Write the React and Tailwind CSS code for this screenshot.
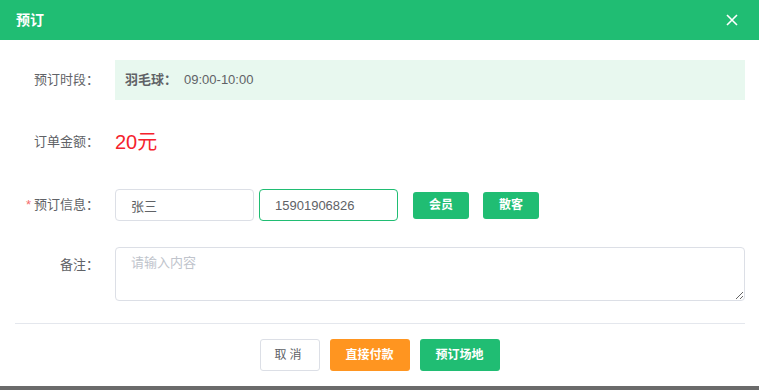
import React, { useState } from 'react';

const font = { fontFamily: '"Liberation Sans", "Noto Sans CJK SC", sans-serif' };

const Row = ({ label, required, className = '', children }) => (
  <div className={`flex ${className}`}>
    <div className="w-[100px] shrink-0 pr-[1px] text-right text-[13px] text-[#606266]">
      {required && <span className="mr-[3px] text-[#f56c6c]">*</span>}
      {label}
    </div>
    <div className="ml-[15px] flex-1">{children}</div>
  </div>
);

const App = () => {
  const [name, setName] = useState('张三');
  const [phone, setPhone] = useState('15901906826');
  const [note, setNote] = useState('');

  return (
    <div className="flex h-[390px] w-[759px] flex-col bg-[#6b6b6b]" style={font}>
      <div className="h-[386px] bg-white">
        <div className="flex h-[40px] items-center justify-between bg-[#20bd73] pl-[16px] pr-[21px]">
          <span className="text-[14px] font-bold text-white">预订</span>
          <svg width="12" height="12" viewBox="0 0 12 12" className="text-white">
            <path d="M1 1L11 11M11 1L1 11" stroke="currentColor" strokeWidth="1.6" />
          </svg>
        </div>

        <div className="pr-[14px] pt-[20px]">
          <Row label="预订时段：" className="items-center">
            <div className="flex h-[40px] items-center bg-[#e8f8ef] px-[10px] text-[13px] text-[#606266]">
              <span className="font-bold">羽毛球：</span>
              <span className="ml-[7px]">09:00-10:00</span>
            </div>
          </Row>

          <Row label="订单金额：" className="mt-[27px] items-center">
            <span className="text-[20px] text-[#f5222d]">20元</span>
          </Row>

          <Row label="预订信息：" required className="mt-[32px] items-center">
            <div className="flex items-center">
              <input
                value={name}
                onChange={(e) => setName(e.target.value)}
                className="h-[32px] w-[139px] rounded-[4px] border border-[#dcdfe6] px-[15px] text-[13px] text-[#606266] outline-none"
              />
              <input
                value={phone}
                onChange={(e) => setPhone(e.target.value)}
                className="ml-[5px] h-[32px] w-[139px] rounded-[4px] border border-[#20bd73] px-[15px] text-[13px] text-[#606266] outline-none"
              />
              <button className="ml-[15px] h-[27px] w-[56px] rounded-[3px] bg-[#20bd73] text-[12px] font-bold text-white">
                会员
              </button>
              <button className="ml-[14px] h-[27px] w-[56px] rounded-[3px] bg-[#20bd73] text-[12px] font-bold text-white">
                散客
              </button>
            </div>
          </Row>

          <Row label="备注：" className="mt-[26px] pt-[8px]">
            <textarea
              value={note}
              onChange={(e) => setNote(e.target.value)}
              placeholder="请输入内容"
              className="-mt-[8px] block h-[54px] w-full resize-y rounded-[4px] border border-[#dcdfe6] px-[15px] py-[5px] text-[13px] text-[#606266] outline-none placeholder:text-[#c0c4cc]"
            />
          </Row>
        </div>

        <div className="mx-[15px] mt-[22px] h-px w-[730px] bg-[#e4e7ed]" />

        <div className="mt-[15px] flex justify-center gap-[10px]">
          <button className="h-[32px] w-[60px] rounded-[3px] border border-[#dcdfe6] bg-white text-[12px] tracking-[3px] text-[#606266]">
            取消
          </button>
          <button className="h-[32px] w-[80px] rounded-[3px] bg-[#ff9520] text-[12px] font-bold text-white">
            直接付款
          </button>
          <button className="h-[32px] w-[80px] rounded-[3px] bg-[#20bd73] text-[12px] font-bold text-white">
            预订场地
          </button>
        </div>
      </div>
    </div>
  );
};

export default App;
